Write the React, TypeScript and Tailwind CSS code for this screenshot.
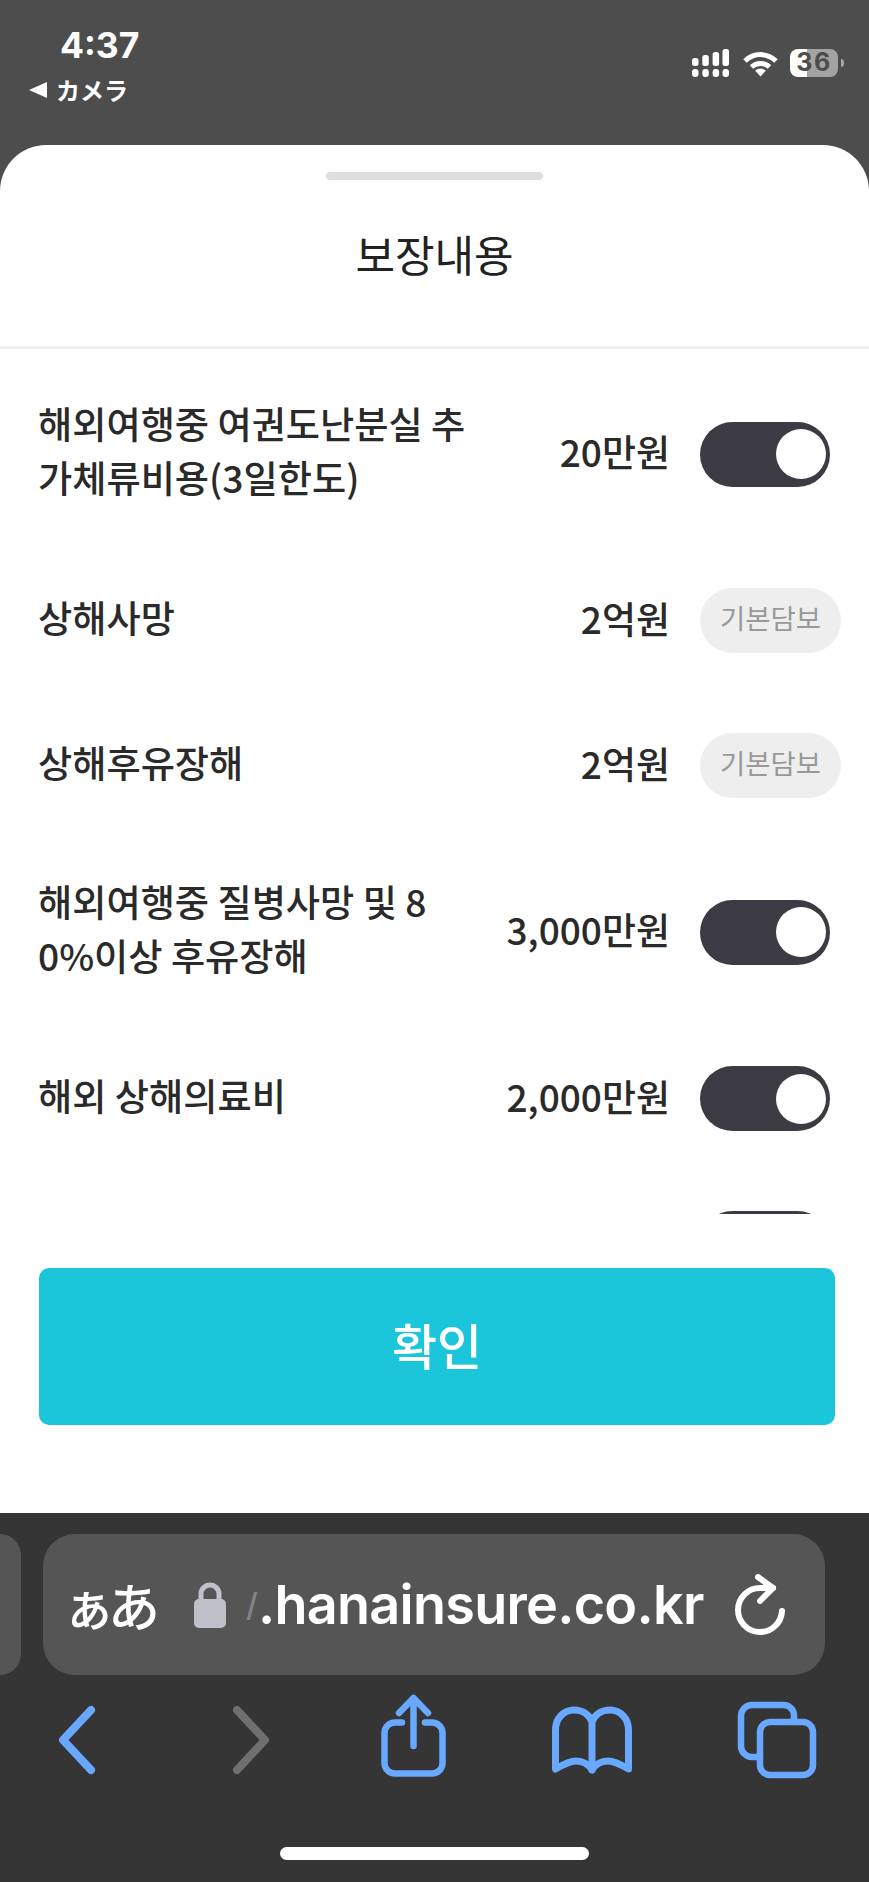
const ROWS: { label: string; amount: string; base?: boolean }[] = [
  { label: '해외여행중 여권도난분실 추가체류비용(3일한도)', amount: '20만원' },
  { label: '상해사망', amount: '2억원', base: true },
  { label: '상해후유장해', amount: '2억원', base: true },
  { label: '해외여행중 질병사망 및 80%이상 후유장해', amount: '3,000만원' },
  { label: '해외 상해의료비', amount: '2,000만원' },
  { label: '', amount: '' },
]

function Toggle() {
  return (
    <div className="flex h-[65px] w-[130px] items-center justify-end rounded-full bg-[#3c3b43] pr-[4px]">
      <div className="h-[50px] w-[50px] rounded-full bg-white" />
    </div>
  )
}

function StatusBar() {
  return (
    <div className="flex h-[145px] shrink-0 justify-between bg-[#4d4d4d] text-white">
      <div className="flex flex-col">
        <div className="ml-[60px] mt-[24px] font-['Inter',sans-serif] text-[35.5px] leading-[44px] font-bold">4:37</div>
        <div className="ml-[29px] mt-[7px] flex items-center">
          <svg width="18" height="16" viewBox="0 0 18 16" className="mr-[9px]">
            <path d="M18 0V16L0 8Z" fill="#fff" />
          </svg>
          <span className="font-['Noto_Sans_CJK_JP',sans-serif] text-[24px] leading-[30px] font-bold">カメラ</span>
        </div>
      </div>
      <div className="mr-[25px] mt-[49px] flex items-start">
        <svg width="37" height="28" viewBox="0 0 37 28" fill="#fff">
          <rect x="0" y="9" width="6.5" height="8" rx="2.5" />
          <rect x="10.3" y="6" width="6.5" height="11" rx="2.5" />
          <rect x="20.6" y="3" width="6.5" height="14" rx="2.5" />
          <rect x="30.5" y="0" width="6.5" height="17" rx="2.5" />
          <rect x="0" y="20" width="6.5" height="8" rx="3" />
          <rect x="10.3" y="20" width="6.5" height="8" rx="3" />
          <rect x="20.6" y="20" width="6.5" height="8" rx="3" />
          <rect x="30.5" y="20" width="6.5" height="8" rx="3" />
        </svg>
        <svg width="35" height="26" viewBox="0 0 35 26" className="ml-[14px] mt-[2px]" fill="none" stroke="#fff" strokeWidth="5">
          <path d="M2 10A22 22 0 0 1 33 10" />
          <path d="M8.5 16A13 13 0 0 1 26.5 16" />
          <path d="M12 19.5Q17.5 15.5 23 19.5L17.5 25.5Z" fill="#fff" stroke="none" />
        </svg>
        <div className="ml-[12px] flex h-[28px] w-[48px] items-center justify-center rounded-[8px] bg-[linear-gradient(90deg,#fff_36%,#a3a3a3_36%)] font-['Inter',sans-serif] text-[25px] font-bold tracking-[1.5px] text-[#4d4d4d]">
          36
        </div>
        <div className="ml-[3px] mt-[10px] h-[8px] w-[3px] rounded-r-full bg-[#a3a3a3]" />
      </div>
    </div>
  )
}

function Sheet() {
  return (
    <div className="flex min-h-0 flex-1 flex-col rounded-t-[46px] bg-white">
      <div className="mx-auto mt-[27px] h-[8px] w-[217px] shrink-0 rounded-full bg-[#dedede]" />
      <div className="flex h-[166px] shrink-0 items-center justify-center pb-[19px] text-[43px] text-[#222]">보장내용</div>
      <div className="h-[3px] shrink-0 bg-[#eeeeee]" />

      {/* list is cut off by the footer button */}
      <div className="h-[865px] shrink-0 overflow-hidden pl-[38px] pr-[28px] pt-[51px]">
        <div className="flex flex-col gap-[80px]">
          {ROWS.map((row, i) => (
            <div key={i} className="flex min-h-[65px] items-center">
              <div className="min-w-0 flex-1 -translate-y-[4px] pr-[66px] text-[37.2px] leading-[54px] font-medium break-all text-[#2a2a2a]">
                {row.label}
              </div>
              <div className="mr-[30px] shrink-0 -translate-y-[3px] text-[37px] leading-[54px] font-medium text-[#2a2a2a]">{row.amount}</div>
              <div className="w-[141px] shrink-0">
                {row.base ? (
                  <div className="flex h-[65px] items-center justify-center rounded-full bg-[#eeeeee] pb-[6px] text-[27.5px] text-[#999]">
                    기본담보
                  </div>
                ) : (
                  <Toggle />
                )}
              </div>
            </div>
          ))}
        </div>
      </div>

      <button className="ml-[39px] mr-[34px] mt-[54px] flex h-[157px] shrink-0 items-center justify-center rounded-[10px] bg-[#1bc5da] pb-[6px] text-[49px] font-medium text-white">
        확인
      </button>
    </div>
  )
}

function Toolbar() {
  return (
    <div className="h-[369px] shrink-0 bg-[#353535]">
      <div className="flex pt-[21px]">
        <div className="h-[141px] w-[21px] rounded-r-[30px] bg-[#555555]" />
        <div className="ml-[22px] flex h-[141px] w-[782px] items-center rounded-[32px] bg-[#555555] text-white">
          <span className="ml-[20px] w-[94px] shrink-0 font-['Noto_Sans_CJK_JP',sans-serif] text-[52px] leading-none font-medium tracking-[-7px]">ぁあ</span>
          <svg width="32" height="46" viewBox="0 0 32 46" className="ml-[37px] shrink-0">
            <path d="M7 18V12A9 9 0 0 1 25 12V18" fill="none" stroke="#c0c0cb" strokeWidth="5" />
            <rect x="0" y="17" width="32" height="29" rx="5" fill="#c0c0cb" />
          </svg>
          <span className="ml-[20px] w-[11px] shrink-0 font-['Inter',sans-serif] text-[32px] leading-none font-medium text-white/30">/</span>
          <span className="ml-[1px] font-['Inter',sans-serif] text-[54px] leading-none font-semibold tracking-[-0.75px]">.hanainsure.co.kr</span>
          <svg width="50" height="62" viewBox="0 0 50 62" className="ml-auto mr-[40px] shrink-0" fill="none" stroke="#fff" strokeWidth="6" strokeLinecap="round" strokeLinejoin="round">
            <path d="M47 37A22 22 0 1 1 25 14H38" />
            <path d="M23 3L38 14L25 27" />
          </svg>
        </div>
      </div>

      <div className="mt-[19px] flex h-[84px] items-start">
        <svg width="42" height="72" viewBox="0 0 42 72" className="ml-[56px] mt-[10px]" fill="none" stroke="#69a8ff" strokeWidth="8" strokeLinecap="round" strokeLinejoin="round">
          <path d="M35 6L7 36L35 66" />
        </svg>
        <svg width="42" height="72" viewBox="0 0 42 72" className="ml-[133px] mt-[10px]" fill="none" stroke="#6f6f6f" strokeWidth="8" strokeLinecap="round" strokeLinejoin="round">
          <path d="M6 6L34 36L6 66" />
        </svg>
        <svg width="66" height="84" viewBox="0 0 66 84" className="ml-[108px]" fill="none" stroke="#69a8ff" strokeWidth="6.5" strokeLinecap="round" strokeLinejoin="round">
          <path d="M21 28.5H14A10.5 10.5 0 0 0 3.5 39V69A10.5 10.5 0 0 0 14 79.5H51A10.5 10.5 0 0 0 61.5 69V39A10.5 10.5 0 0 0 51 28.5H44" />
          <path d="M32.5 4V52M18 19L32.5 4L47 19" />
        </svg>
        <svg width="80" height="68" viewBox="0 0 80 68" className="ml-[105px] mt-[12px]" fill="none" stroke="#69a8ff" strokeWidth="7" strokeLinecap="round" strokeLinejoin="round">
          <path d="M3.5 63V24C3.5 12 12 4 22 4C30 4 37 8 40 16C43 8 50 4 58 4C68 4 76.5 12 76.5 24V63C68 58 62 55 56 55C49 55 43 59 40 64C37 59 31 55 24 55C18 55 12 58 3.5 63ZM40 16V64" />
        </svg>
        <svg width="80" height="78" viewBox="0 0 80 78" className="ml-[105px] mt-[7px]" fill="none" stroke="#69a8ff" strokeWidth="6.5" strokeLinecap="round" strokeLinejoin="round">
          <rect x="23" y="21" width="53" height="53" rx="10" />
          <path d="M57 21V15A10.5 10.5 0 0 0 46.5 4H15A11 11 0 0 0 4 15V45A11 11 0 0 0 15 56H23" />
        </svg>
      </div>

      <div className="mx-auto mt-[69px] h-[13px] w-[309px] rounded-full bg-white" />
    </div>
  )
}

export default function App() {
  return (
    <div className="flex h-[1882px] w-[869px] flex-col overflow-hidden bg-[#4d4d4d] font-['Noto_Sans_CJK_KR',sans-serif]">
      <StatusBar />
      <Sheet />
      <Toolbar />
    </div>
  )
}
